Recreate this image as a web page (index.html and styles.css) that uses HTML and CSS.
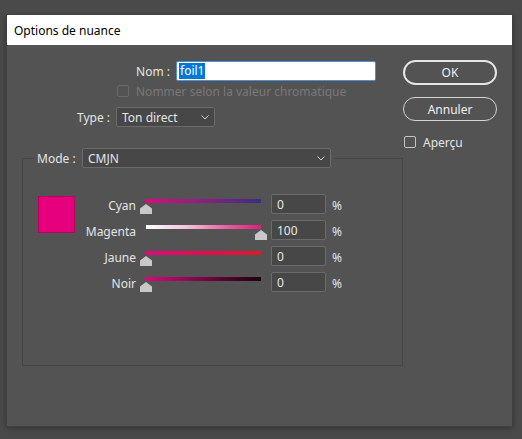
FILE: index.html
```html
<!DOCTYPE html>
<html lang="fr">
<head>
<meta charset="utf-8">
<title>Options de nuance</title>
<link rel="stylesheet" href="styles.css">
</head>
<body>
<div class="dialog">
  <div class="titlebar">Options de nuance</div>
  <div class="body">
    <div class="main">
      <div class="row-nom">
        <label class="lbl-nom">Nom :</label>
        <div class="text-input"><span class="sel">foil1</span></div>
      </div>
      <div class="row-check disabled">
        <span class="box"></span>
        <span>Nommer selon la valeur chromatique</span>
      </div>
      <div class="row-type">
        <label class="lbl-type">Type :</label>
        <div class="select sel-type"><span>Ton direct</span><svg class="chev" width="8" height="5" viewBox="0 0 8 5"><polyline points="0.5,0.5 4,4 7.5,0.5" fill="none" stroke="#cfcfcf" stroke-width="1"/></svg></div>
      </div>
      <fieldset class="group">
        <legend class="legend">
          <span class="lbl-mode">Mode :</span>
          <div class="select sel-mode"><span>CMJN</span><svg class="chev" width="8" height="5" viewBox="0 0 8 5"><polyline points="0.5,0.5 4,4 7.5,0.5" fill="none" stroke="#cfcfcf" stroke-width="1"/></svg></div>
        </legend>
        <div class="mix">
          <div class="swatch"></div>
          <div class="rows">
            <div class="row">
              <span class="lbl">Cyan</span>
              <div class="slider"><div class="track t-cyan"></div><svg class="thumb" style="left:0px" width="12" height="10" viewBox="0 0 12 10"><polygon points="0,4.5 6,0 12,4.5 12,10 0,10" fill="#c8c8c8"/></svg></div>
              <div class="num">0</div>
              <span class="pct">%</span>
            </div>
            <div class="row">
              <span class="lbl">Magenta</span>
              <div class="slider"><div class="track t-magenta"></div><svg class="thumb" style="left:115px" width="12" height="10" viewBox="0 0 12 10"><polygon points="0,4.5 6,0 12,4.5 12,10 0,10" fill="#c8c8c8"/></svg></div>
              <div class="num">100</div>
              <span class="pct">%</span>
            </div>
            <div class="row">
              <span class="lbl">Jaune</span>
              <div class="slider"><div class="track t-jaune"></div><svg class="thumb" style="left:0px" width="12" height="10" viewBox="0 0 12 10"><polygon points="0,4.5 6,0 12,4.5 12,10 0,10" fill="#c8c8c8"/></svg></div>
              <div class="num">0</div>
              <span class="pct">%</span>
            </div>
            <div class="row">
              <span class="lbl">Noir</span>
              <div class="slider"><div class="track t-noir"></div><svg class="thumb" style="left:0px" width="12" height="10" viewBox="0 0 12 10"><polygon points="0,4.5 6,0 12,4.5 12,10 0,10" fill="#c8c8c8"/></svg></div>
              <div class="num">0</div>
              <span class="pct">%</span>
            </div>
          </div>
        </div>
      </fieldset>
    </div>
    <div class="side">
      <div class="btn btn-ok">OK</div>
      <div class="btn btn-cancel">Annuler</div>
      <div class="row-check apercu">
        <span class="box"></span>
        <span>Aperçu</span>
      </div>
    </div>
  </div>
</div>
</body>
</html>
```

FILE: styles.css
```css
* { box-sizing: border-box; }
html, body { margin: 0; padding: 0; }
body {
  background: #4a4a4a;
  width: 522px;
  height: 439px;
  overflow: hidden;
  font-family: "Noto Sans", "Open Sans", sans-serif;
  font-size: 12px;
  color: #e4e4e4;
  padding: 15px 0 0 6px;
}
.dialog {
  width: 507px;
  height: 412px;
  background: #535353;
  border: 1px solid #404040;
  border-top: none;
  box-shadow: 0 1px 5px rgba(0,0,0,0.35);
  display: flex;
  flex-direction: column;
}
.titlebar {
  height: 30px;
  background: #ffffff;
  color: #000;
  padding-left: 7px;
  display: flex;
  align-items: center;
  font-size: 12px;
}
.body {
  flex: 1;
  display: flex;
}
.main {
  width: 396px;
  padding-top: 16px;
}
.row-nom {
  display: flex;
  align-items: center;
  height: 20px;
}
.lbl-nom {
  width: 163px;
  text-align: right;
  margin-right: 6px;
}
.text-input {
  width: 200px;
  height: 20px;
  background: #fff;
  border: 1px solid #4d8fdb;
  border-radius: 2px;
  padding: 1px 2px;
  display: flex;
  align-items: center;
}
.sel {
  background: #0078d7;
  color: #fff;
  line-height: 16px;
  padding: 0 1px;
}
.row-check {
  display: flex;
  align-items: center;
  height: 12px;
  gap: 7px;
}
.row-check .box {
  width: 12px;
  height: 12px;
  border: 1px solid #c4c4c4;
  border-radius: 2px;
}
.row-check.disabled {
  margin-top: 4px;
  margin-left: 110px;
  color: #787878;
}
.row-check.disabled .box { border-color: #6a6a6a; }
.row-type {
  display: flex;
  align-items: center;
  height: 20px;
  margin-top: 10px;
}
.lbl-type {
  width: 103px;
  text-align: right;
  margin-right: 6px;
}
.select {
  height: 20px;
  background: #474747;
  border: 1px solid #6b6b6b;
  border-radius: 2px;
  display: flex;
  align-items: center;
  justify-content: space-between;
  padding: 0 5px 0 5px;
  color: #e4e4e4;
}
.sel-type { width: 99px; }
.sel-mode { width: 249px; }
.chev { margin-top: 1px; }
.group {
  margin: 21px 0 0 15px;
  width: 381px;
  height: 218px;
  border: 1px solid #444444;
  padding: 26px 0 0 15px;
  min-width: 0;
}
.legend {
  display: flex;
  align-items: center;
  padding: 0 3px;
  margin-left: -4px;
  height: 20px;
}
.lbl-mode {
  width: 45px;
}
.mix {
  display: flex;
}
.swatch {
  width: 37px;
  height: 37px;
  background: #e6007e;
  border: 1px solid #b8005f;
  margin-top: 2px;
}
.rows {
  display: flex;
  flex-direction: column;
  gap: 6px;
}
.row {
  display: flex;
  height: 20px;
  align-items: center;
}
.lbl {
  width: 61px;
  text-align: right;
  padding-top: 3px;
}
.slider {
  position: relative;
  width: 127px;
  height: 20px;
  margin-left: 4px;
}
.track {
  position: absolute;
  left: 6px;
  right: 6px;
  top: 5px;
  height: 4px;
}
.t-cyan { background: linear-gradient(to right, #e0087f, #9a1c7f 40%, #3a2e82); }
.t-magenta { background: linear-gradient(to right, #ffffff, #f4c4dc 35%, #e5609f 70%, #dc1e7c); }
.t-jaune { background: linear-gradient(to right, #dc0a78, #dd1048 60%, #dc1a2c); }
.t-noir { background: linear-gradient(to right, #d8087c, #8c0450 40%, #1c0010); }
.thumb {
  position: absolute;
  top: 10px;
}
.num {
  width: 55px;
  height: 20px;
  margin-left: 4px;
  background: #474747;
  border: 1px solid #6b6b6b;
  border-radius: 2px;
  padding-left: 5px;
  display: flex;
  align-items: center;
  color: #e8e8e8;
}
.pct {
  margin-left: 6px;
  padding-top: 2px;
}
.side {
  width: 94px;
  padding-top: 15px;
}
.btn {
  width: 94px;
  display: flex;
  align-items: center;
  justify-content: center;
  border-radius: 13px;
  color: #f0f0f0;
}
.btn-ok {
  height: 25px;
  border: 2px solid #e6e6e6;
}
.btn-cancel {
  height: 24px;
  margin-top: 12px;
  border: 1px solid #d4d4d4;
}
.apercu {
  margin-top: 15px;
  margin-left: 1px;
}
```
